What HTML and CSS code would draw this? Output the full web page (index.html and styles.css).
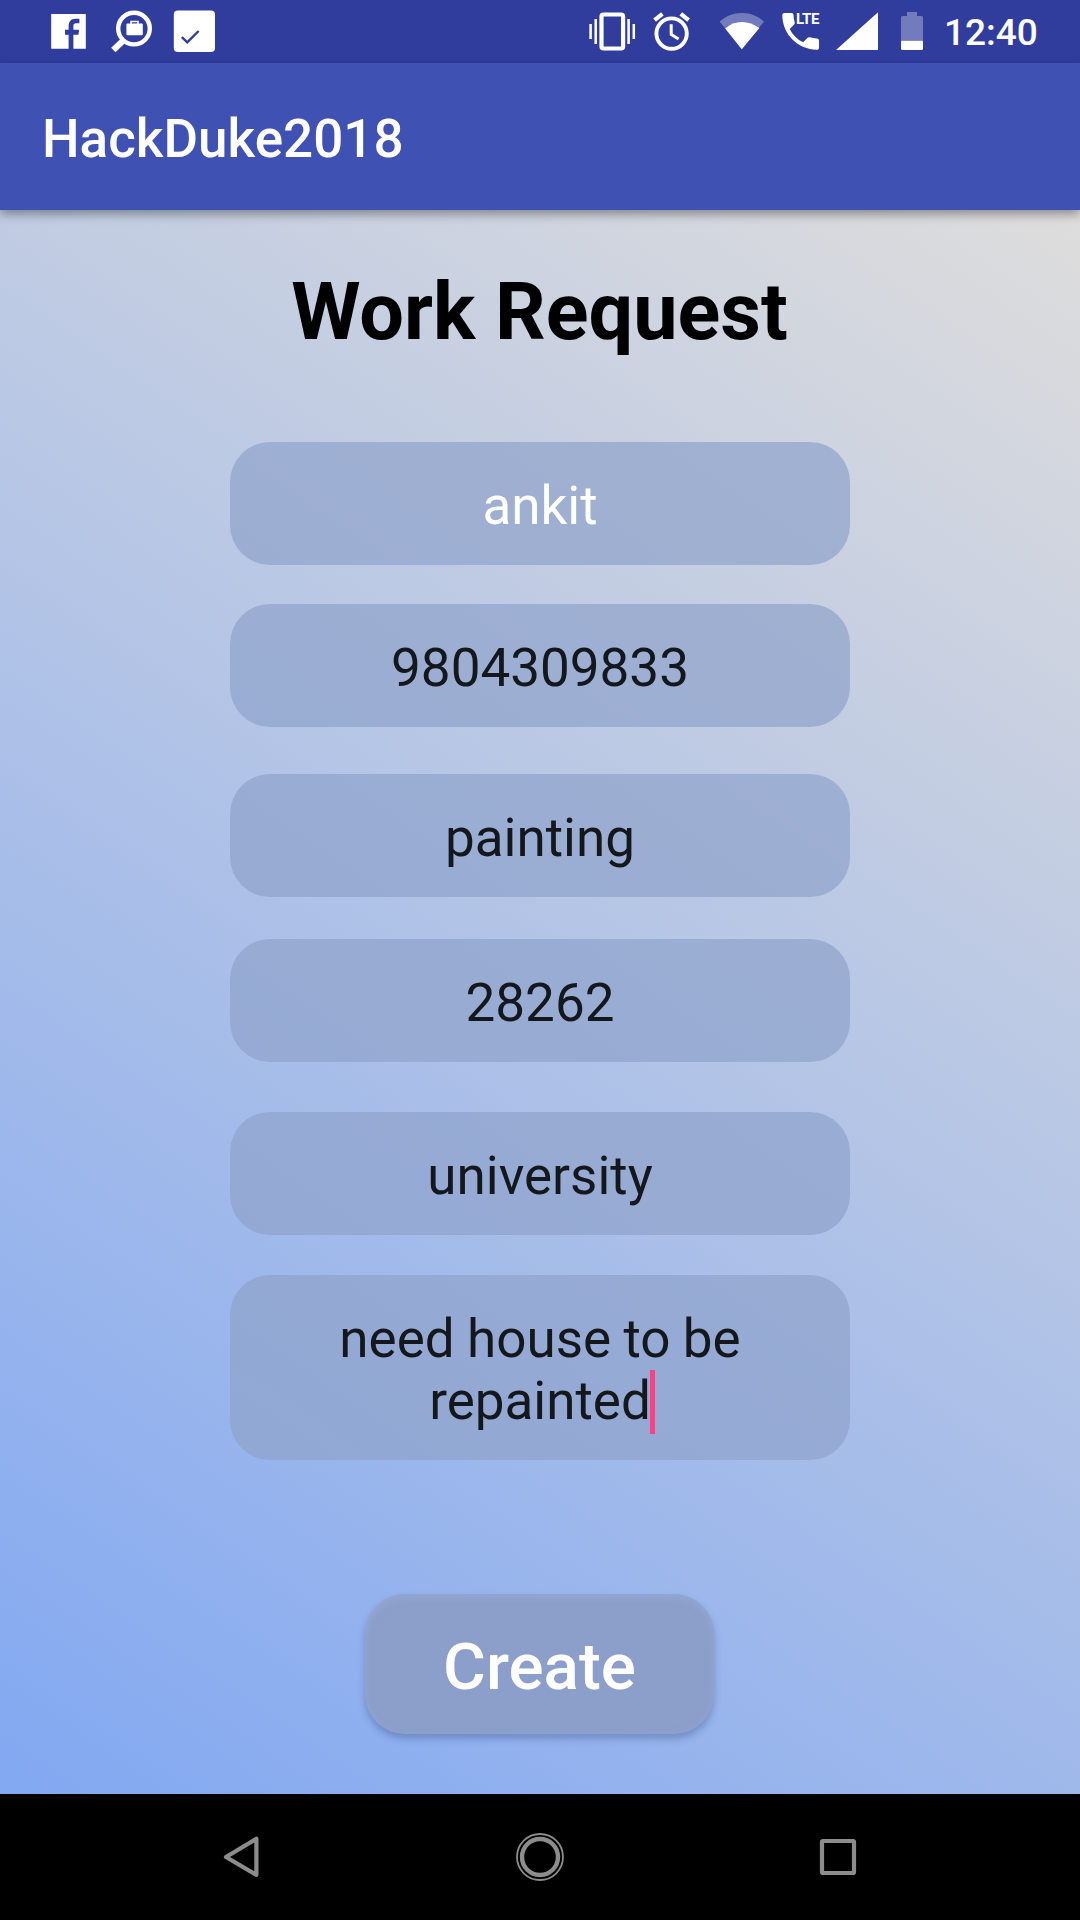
FILE: index.html
```html
<!DOCTYPE html>
<html lang="en">
<head>
<meta charset="utf-8">
<title>HackDuke2018</title>
<link rel="stylesheet" href="styles.css">
</head>
<body>
<div class="screen">
  <div class="status-bar">
    <svg class="facebook" width="35" height="63" viewBox="51 0 35 63"><path fill="#fff" fill-rule="evenodd" d="M51.2 14H85.8V48.8H73.4V34.8H78.4L79.2 29.8H73.4V26C73.4 24.2 74.2 23.3 76 23.3H79.4V18.7H75.6C71.1 18.7 68.6 21.4 68.6 26.4V29.8H65V34.8H68.6V48.8H51.2Z"/></svg>
    <svg class="job-search" width="42" height="63" viewBox="111 0 42 63"><circle cx="134" cy="28.6" r="15.8" fill="none" stroke="#fff" stroke-width="4.4"/><path d="M123.6 40.2L113.3 50" stroke="#fff" stroke-width="6.2"/><rect x="126.4" y="23.6" width="16.4" height="11.6" rx="1" fill="#fff"/><path d="M131 24V21.6H138V24" fill="none" stroke="#fff" stroke-width="1.5"/></svg>
    <svg class="task" width="42" height="63" viewBox="173 0 42 63"><rect x="173.8" y="10.4" width="41.2" height="41.6" rx="4" fill="#fff"/><path d="M181.8 37.2L187.3 42.4L198.6 31" fill="none" stroke="#303d9d" stroke-width="2.4"/></svg>
    <svg class="vibrate" width="48" height="63" viewBox="588 0 48 63"><rect x="601.5" y="14.5" width="21.6" height="34" rx="2" fill="none" stroke="#fff" stroke-width="4.2"/><path d="M590.6 24V39M633.8 24V39M595.7 19V44M628.6 19V44" stroke="#fff" stroke-width="2.5"/></svg>
    <svg class="alarm" width="38" height="63" viewBox="653 0 38 63"><circle cx="671.6" cy="33.6" r="15.2" fill="none" stroke="#fff" stroke-width="3.9"/><path d="M671.2 24.3V34.4L678.6 39" fill="none" stroke="#fff" stroke-width="3"/><path d="M654.6 20.2L662.4 13.8M680.8 13.8L688.6 20.2" stroke="#fff" stroke-width="4.2"/></svg>
    <svg class="wifi" width="46" height="63" viewBox="719 0 46 63"><path fill="#fff" opacity=".32" d="M741.8 49.2L719.6 21.6C725.6 16.2 733 13 741.8 13S758 16.2 764 21.6Z"/><path fill="#fff" d="M741.8 49.2L725.2 28.4C730 24.2 735.4 22 741.8 22S753.6 24.2 759.4 28Z"/></svg>
    <svg class="lte" width="38" height="63" viewBox="782 0 38 63"><path fill="#fff" transform="translate(776.2 6.9) scale(2.04)" d="M20 15.5c-1.25 0-2.45-.2-3.57-.57-.35-.11-.74-.03-1.02.24l-2.2 2.2c-2.83-1.44-5.15-3.75-6.59-6.59l2.2-2.21c.28-.26.36-.65.25-1C8.7 6.45 8.5 5.25 8.5 4c0-.55-.45-1-1-1H4c-.55 0-1 .45-1 1 0 9.39 7.61 17 17 17 .55 0 1-.45 1-1v-3.5c0-.55-.45-1-1-1z"/><text class="lte-label" x="796" y="24" textLength="23.4" lengthAdjust="spacing">LTE</text></svg>
    <svg class="signal" width="42" height="63" viewBox="836 0 42 63"><path fill="#fff" d="M836 50L878 12.2V50Z"/></svg>
    <svg class="battery" width="22" height="63" viewBox="901 0 22 63"><path fill="#fff" opacity=".32" d="M901 40.7V17.5Q901 16 902.5 16H907V12H917V16H921.5Q923 16 923 17.5V40.7Z"/><path fill="#fff" d="M901 40.7H923V48.5Q923 50 921.5 50H902.5Q901 50 901 48.5Z"/></svg>
    <span class="clock">12:40</span>
  </div>
  <header class="app-bar">HackDuke2018</header>
  <main class="form">
    <h1 class="title">Work Request</h1>
    <div class="field name">ankit</div>
    <div class="field phone">9804309833</div>
    <div class="field job">painting</div>
    <div class="field zip">28262</div>
    <div class="field area">university</div>
    <div class="field details">need house to be<br>repainted<span class="caret"></span></div>
    <button class="create">Create</button>
  </main>
  <nav class="nav-bar">
    <svg width="48" height="48" viewBox="217 1833 48 48"><path d="M226 1857L256.4 1838.8V1875Z" fill="none" stroke="#8c8c8c" stroke-width="4.2" stroke-linejoin="round"/></svg>
    <svg width="50" height="50" viewBox="515 1832 50 50" fill="none" stroke="#8c8c8c"><circle cx="540" cy="1857" r="23" stroke-width="1.8"/><circle cx="540" cy="1857" r="18" stroke-width="4.4"/></svg>
    <svg width="48" height="48" viewBox="814 1833 48 48"><rect x="822" y="1841" width="32" height="32" rx="1" fill="none" stroke="#8c8c8c" stroke-width="4.2"/></svg>
  </nav>
</div>
</body>
</html>
```
FILE: styles.css
```css
* { box-sizing: border-box; }
body { margin: 0; font-family: Roboto, sans-serif; }
.screen { width: 1080px; height: 1920px; display: flex; flex-direction: column; overflow: hidden; }

.status-bar { height: 63px; flex: none; display: flex; padding-left: 51px; background: #303d9d; }
.status-bar svg { flex: none; }
.job-search { margin-left: 25px; }
.task { margin-left: 20px; }
.vibrate { margin-left: 373px; }
.alarm { margin-left: 17px; }
.wifi { margin-left: 28px; }
.lte { margin-left: 17px; }
.lte-label { font: 700 15px Roboto, sans-serif; fill: #fff; }
.signal { margin-left: 16px; }
.battery { margin-left: 23px; }
.clock { margin-left: 21px; padding-top: 11px; font-size: 37px; font-weight: 500; line-height: 43px; color: #fff; }

.app-bar { position: relative; height: 147px; flex: none; padding: 45px 42px 0; background: #3f51b3; color: #fff; font-size: 53px; font-weight: 500; line-height: 62px; box-shadow: 0 4px 10px rgba(0, 0, 0, .38); }

.form { height: 1584px; flex: none; display: flex; flex-direction: column; align-items: center; background: linear-gradient(34.29deg, #82a8f2, #dedddc); }
.title { margin: 56px 1px 0 0; height: 92px; font-size: 79.2px; font-weight: 700; line-height: 92px; color: #000; }
.field { width: 620px; height: 123px; padding-top: 33px; border-radius: 40px; background: rgba(143, 162, 203, .7); color: #14181c; font-size: 53px; line-height: 62px; text-align: center; }
.name { margin-top: 84px; color: #fff; }
.phone { margin-top: 39px; }
.job { margin-top: 47px; }
.zip { margin-top: 42px; }
.area { margin-top: 50px; }
.details { margin-top: 40px; height: 185px; word-spacing: -.8px; }
.caret { position: relative; }
.caret::after { content: ""; position: absolute; left: -1px; top: 0; width: 5px; height: 64px; background: #ff4081; }
.create { margin: 134px 1px 0 0; width: 349px; height: 140px; padding: 4px 0 0; border: 0; border-radius: 40px; background: #8b9fca; color: #fff; font: 500 65.6px/77px Roboto, sans-serif; box-shadow: 0 5px 7px rgba(40, 60, 110, .3), inset 0 3px 9px rgba(160, 180, 225, .5); }

.nav-bar { flex: 1; display: flex; align-items: center; justify-content: space-between; padding: 0 218px 0 217px; background: #000; }
```
